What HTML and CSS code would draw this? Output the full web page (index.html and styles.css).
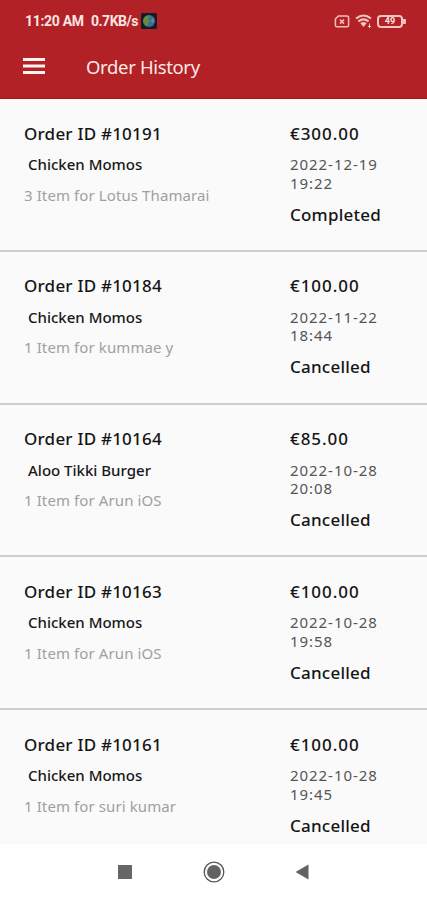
FILE: index.html
```html
<!DOCTYPE html>
<html lang="en">
<head>
<meta charset="utf-8">
<meta name="viewport" content="width=device-width, initial-scale=1">
<title>Order History</title>
<link rel="stylesheet" href="styles.css">
</head>
<body>
<div class="screen">
  <header class="top">
    <div class="status">
      <span class="clock">11:20 AM</span>
      <span class="speed">0.7KB/s</span>
      <svg class="globe" width="16" height="16" viewBox="0 0 16 16"><rect width="16" height="16" rx="1.5" fill="#181c22"/><circle cx="8" cy="8" r="6" fill="#356f9b"/><path d="M3 5c2-3 5-3 6-2L7 6l2 2-2 2v3C4 13 2 10 2 8z" fill="#638b45"/><path d="M11 5l2 1v3l-2 1-1-2z" fill="#638b78"/></svg>
      <div class="indicators">
        <svg width="16" height="13" viewBox="0 0 16 13" fill="none" stroke="#f3bfbb" stroke-width="1.5"><path d="M4.3 1H13q1.6 0 1.6 1.6v7.6q0 1.6-1.6 1.6H3q-1.6 0-1.6-1.6V4z"/><path d="M6 4.6l4 4M10 4.6l-4 4"/></svg>
        <svg width="18" height="14" viewBox="0 0 18 14" fill="none" stroke="#f3c4c0" stroke-width="2.1"><path d="M1 4.5q7.5-6 15 0M3.4 7.3q5.1-4 10.2 0"/><path d="M5.3 9.2q3.2-2.2 6.4 0L8.5 13z" fill="#f3c4c0" stroke="none"/><path d="M14.5 9.5v4M13 12l1.5 1.5L16 12" stroke-width="1"/></svg>
        <span class="battery">49</span>
      </div>
    </div>
    <div class="bar">
      <svg class="menu" width="22" height="16" viewBox="0 0 22 16" fill="#fff2f0"><rect width="22" height="3"/><rect y="6.5" width="22" height="3"/><rect y="13" width="22" height="3"/></svg>
      <h1 class="title">Order History</h1>
    </div>
  </header>
  <main class="orders">
    <article class="order">
      <div><h2 class="id">Order ID #10191</h2><p class="name">Chicken Momos</p><p class="items">3 Item for Lotus Thamarai</p></div>
      <div><p class="price">€300.00</p><p class="date">2022-12-19<br>19:22</p><p class="state">Completed</p></div>
    </article>
    <article class="order">
      <div><h2 class="id">Order ID #10184</h2><p class="name">Chicken Momos</p><p class="items">1 Item for kummae y</p></div>
      <div><p class="price">€100.00</p><p class="date">2022-11-22<br>18:44</p><p class="state">Cancelled</p></div>
    </article>
    <article class="order">
      <div><h2 class="id">Order ID #10164</h2><p class="name">Aloo Tikki Burger</p><p class="items">1 Item for Arun iOS</p></div>
      <div><p class="price">€85.00</p><p class="date">2022-10-28<br>20:08</p><p class="state">Cancelled</p></div>
    </article>
    <article class="order">
      <div><h2 class="id">Order ID #10163</h2><p class="name">Chicken Momos</p><p class="items">1 Item for Arun iOS</p></div>
      <div><p class="price">€100.00</p><p class="date">2022-10-28<br>19:58</p><p class="state">Cancelled</p></div>
    </article>
    <article class="order">
      <div><h2 class="id">Order ID #10161</h2><p class="name">Chicken Momos</p><p class="items">1 Item for suri kumar</p></div>
      <div><p class="price">€100.00</p><p class="date">2022-10-28<br>19:45</p><p class="state">Cancelled</p></div>
    </article>
  </main>
  <nav class="nav">
    <svg width="14" height="14" viewBox="0 0 14 14"><rect width="14" height="14" fill="#666"/></svg>
    <svg width="22" height="22" viewBox="0 0 22 22"><circle cx="11" cy="11" r="9.8" fill="none" stroke="#555" stroke-width="1.3"/><circle cx="11" cy="11" r="7" fill="#626262"/></svg>
    <svg width="14" height="16" viewBox="0 0 14 16"><path d="M13.5 .5v15L.5 8z" fill="#626262"/></svg>
  </nav>
</div>
</body>
</html>
```
FILE: styles.css
```css
* { box-sizing: border-box; margin: 0; padding: 0; }
svg { display: block; flex: none; }
body { background: #fff; font-family: "Noto Sans", sans-serif; }
.screen { height: 900px; display: flex; flex-direction: column; overflow: hidden; }
.top { height: 99px; flex: none; background: #b22126; border-bottom: 1px solid #a91319; }
.status { height: 42px; display: flex; align-items: center; padding: 0 21px 0 25px; color: #fbe4e2; font: 700 14px/16px Roboto, sans-serif; white-space: nowrap; }
.clock { width: 66px; letter-spacing: -0.3px; }
.speed { width: 50px; letter-spacing: -0.5px; }
.indicators { margin-left: auto; display: flex; align-items: center; gap: 4.5px; }
.battery { position: relative; width: 26px; height: 13px; border: 2px solid #f3c4c0; border-radius: 4px; font-size: 9px; line-height: 9px; text-align: center; margin-right: 3px; }
.battery::after { content: ""; position: absolute; right: -5px; top: 2px; width: 3px; height: 5px; background: #f3c4c0; border-radius: 0 1px 1px 0; }
.bar { height: 48px; display: flex; align-items: center; padding-left: 23px; }
.title { margin: 2px 0 0 41px; color: #fbe9e7; font-size: 18.5px; line-height: 24px; font-weight: 400; letter-spacing: -0.35px; }
.orders { flex: 1; min-height: 0; overflow: hidden; background: #fafafa; }
.order { height: 152.75px; display: grid; grid-template-columns: 266px 1fr; padding: 22.5px 0 0 24px; border-bottom: 2px solid #cecece; white-space: nowrap; }
.id, .price, .state { font-size: 17px; line-height: 24px; font-weight: 500; color: #151515; letter-spacing: 0.22px; }
.price { letter-spacing: 0.95px; }
.name { margin: 8.5px 0 0 4px; font-size: 15px; line-height: 20px; font-weight: 500; color: #181818; }
.items { margin-top: 10.5px; font-size: 15px; line-height: 20px; color: #a0a0a0; letter-spacing: 0.1px; }
.date { margin-top: 9.5px; font-size: 15px; line-height: 18.5px; color: #555; letter-spacing: 0.95px; }
.state { margin-top: 10.5px; }
.nav { height: 56px; flex: none; display: grid; grid-template-columns: 14px 22px 14px; column-gap: 70.5px; align-items: center; padding-left: 118px; background: #fff; }
```
